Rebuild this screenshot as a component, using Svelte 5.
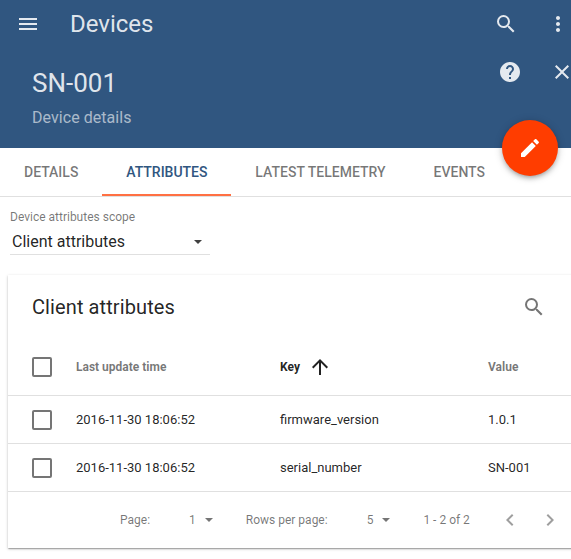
<script>
    const tabs = ['DETAILS', 'ATTRIBUTES', 'LATEST TELEMETRY', 'EVENTS']
    const rows = [
        { time: '2016-11-30 18:06:52', key: 'firmware_version', value: '1.0.1' },
        { time: '2016-11-30 18:06:52', key: 'serial_number', value: 'SN-001' }
    ]
</script>

<div class="page">
    <header>
        <div class="toolbar">
            <svg class="menu" width="24" height="24" viewBox="0 0 24 24"><path d="M3 18h18v-2H3v2zm0-5h18v-2H3v2zm0-7v2h18V6H3z"/></svg>
            <span class="app-title">Devices</span>
            <svg class="search" width="24" height="24" viewBox="0 0 24 24"><path d="M15.5 14h-.79l-.28-.27A6.471 6.471 0 0 0 16 9.5 6.5 6.5 0 1 0 9.5 16c1.61 0 3.09-.59 4.23-1.57l.27.28v.79l5 4.99L20.49 19l-4.99-5zm-6 0C7.01 14 5 11.99 5 9.5S7.01 5 9.5 5 14 7.01 14 9.5 11.99 14 9.5 14z"/></svg>
            <svg class="more" width="24" height="24" viewBox="0 0 24 24"><path d="M12 8c1.1 0 2-.9 2-2s-.9-2-2-2-2 .9-2 2 .9 2 2 2zm0 2c-1.1 0-2 .9-2 2s.9 2 2 2 2-.9 2-2-.9-2-2-2zm0 6c-1.1 0-2 .9-2 2s.9 2 2 2 2-.9 2-2-.9-2-2-2z"/></svg>
        </div>
        <div class="details">
            <div class="names">
                <h1>SN-001</h1>
                <p>Device details</p>
            </div>
            <svg class="help" width="24" height="24" viewBox="0 0 24 24"><path d="M12 2C6.48 2 2 6.48 2 12s4.48 10 10 10 10-4.48 10-10S17.52 2 12 2zm1 17h-2v-2h2v2zm2.07-7.75l-.9.92C13.45 12.9 13 13.5 13 15h-2v-.5c0-1.1.45-2.1 1.17-2.83l1.24-1.26c.37-.36.59-.86.59-1.41 0-1.1-.9-2-2-2s-2 .9-2 2H8c0-2.21 1.79-4 4-4s4 1.79 4 4c0 .88-.36 1.68-.93 2.25z"/></svg>
            <svg class="close" width="24" height="24" viewBox="0 0 24 24"><path d="M19 6.41L17.59 5 12 10.59 6.41 5 5 6.41 10.59 12 5 17.59 6.41 19 12 13.41 17.59 19 19 17.59 13.41 12z"/></svg>
        </div>
    </header>

    <button class="fab" aria-label="Edit">
        <svg width="24" height="24" viewBox="0 0 24 24"><path d="M3 17.25V21h3.75L17.81 9.94l-3.75-3.75L3 17.25zM20.71 7.04c.39-.39.39-1.02 0-1.41l-2.34-2.34c-.39-.39-1.02-.39-1.41 0l-1.83 1.83 3.75 3.75 1.83-1.83z"/></svg>
    </button>

    <nav>
        {#each tabs as tab, i}
            <span class="tab" class:active={i === 1}>{tab}</span>
        {/each}
    </nav>

    <section class="scope">
        <label for="scope-value">Device attributes scope</label>
        <div class="select" id="scope-value">
            <span>Client attributes</span>
            <i class="caret"></i>
        </div>
    </section>

    <section class="card">
        <div class="card-head">
            <h2>Client attributes</h2>
            <svg width="24" height="24" viewBox="0 0 24 24"><path d="M15.5 14h-.79l-.28-.27A6.471 6.471 0 0 0 16 9.5 6.5 6.5 0 1 0 9.5 16c1.61 0 3.09-.59 4.23-1.57l.27.28v.79l5 4.99L20.49 19l-4.99-5zm-6 0C7.01 14 5 11.99 5 9.5S7.01 5 9.5 5 14 7.01 14 9.5 11.99 14 9.5 14z"/></svg>
        </div>

        <div class="row head">
            <span class="check"></span>
            <span>Last update time</span>
            <span class="sorted">Key
                <svg width="24" height="24" viewBox="0 0 24 24"><path d="M4 12l1.41 1.41L11 7.83V20h2V7.83l5.58 5.59L20 12l-8-8-8 8z"/></svg>
            </span>
            <span>Value</span>
        </div>
        {#each rows as row}
            <div class="row">
                <span class="check"></span>
                <span>{row.time}</span>
                <span>{row.key}</span>
                <span>{row.value}</span>
            </div>
        {/each}

        <div class="pager">
            <span class="pager-label">Page:</span>
            <span class="first">1</span><i class="caret small"></i>
            <span class="pager-label rows">Rows per page:</span>
            <span class="second">5</span><i class="caret small"></i>
            <span class="range">1 - 2 of 2</span>
            <svg class="prev" width="24" height="24" viewBox="0 0 24 24"><path d="M15.41 7.41L14 6l-6 6 6 6 1.41-1.41L10.83 12z"/></svg>
            <svg class="next" width="24" height="24" viewBox="0 0 24 24"><path d="M10 6L8.59 7.41 13.17 12l-4.58 4.59L10 18l6-6z"/></svg>
        </div>
    </section>
</div>

<style>
    :global(body) {
        margin: 0;
        background: #fff;
        overflow: hidden;
    }

    .page {
        position: relative;
        width: 571px;
        height: 559px;
        overflow: hidden;
        font-family: Roboto, sans-serif;
        color: rgba(0, 0, 0, 0.87);
    }

    header {
        height: 148px;
        background: #305680;
        color: rgba(255, 255, 255, 0.87);
        fill: rgba(255, 255, 255, 0.87);
    }

    .toolbar {
        display: flex;
        align-items: center;
        height: 48px;
        padding-left: 16px;
    }

    .app-title {
        margin-left: 30px;
        font-size: 24px;
    }

    .toolbar .search {
        margin-left: auto;
    }

    .toolbar .more {
        margin-left: 28px;
        margin-right: 1px;
    }

    .details {
        display: flex;
        padding-left: 32px;
    }

    .names {
        flex: 1;
    }

    h1 {
        margin: 0;
        padding-top: 17px;
        font-size: 26px;
        font-weight: 400;
        line-height: 36px;
    }

    .names p {
        margin: 7px 0 0;
        font-size: 16px;
        line-height: 20px;
        letter-spacing: 0.05px;
        color: rgba(255, 255, 255, 0.6);
    }

    .help {
        margin-top: 12px;
    }

    .close {
        margin: 12px -3px 0 28px;
    }

    .fab {
        position: absolute;
        left: 502px;
        top: 120px;
        width: 56px;
        height: 56px;
        padding: 16px;
        border: 0;
        border-radius: 50%;
        background: #ff3d00;
        fill: #fff;
        box-shadow: 0 1px 8px rgba(0, 0, 0, 0.2), 0 3px 4px rgba(0, 0, 0, 0.14), 0 3px 3px -2px rgba(0, 0, 0, 0.12);
    }

    nav {
        display: flex;
        height: 48px;
        border-bottom: 1px solid #e0e0e0;
    }

    .tab {
        box-sizing: border-box;
        height: 48px;
        padding: 0 24px;
        font-size: 14px;
        font-weight: 500;
        line-height: 48px;
        color: rgba(0, 0, 0, 0.54);
    }

    .tab.active {
        color: #305680;
        letter-spacing: -0.03px;
        border-bottom: 2px solid #ff7043;
    }

    .scope {
        width: 200px;
        margin: 12px 0 0 10px;
    }

    .scope label {
        display: block;
        font-size: 12px;
        line-height: 16px;
        color: rgba(0, 0, 0, 0.54);
    }

    .select {
        display: flex;
        align-items: center;
        justify-content: space-between;
        box-sizing: border-box;
        height: 30px;
        padding: 4px 8px 0 2px;
        font-size: 16px;
        border-bottom: 1px solid #e0e0e0;
    }

    .caret {
        width: 0;
        height: 0;
        border: 4px solid transparent;
        border-top-color: rgba(0, 0, 0, 0.75);
        border-bottom: 0;
    }

    .caret.small {
        border-top-color: rgba(0, 0, 0, 0.54);
        margin-left: 9px;
    }

    .card {
        box-sizing: border-box;
        width: 600px;
        height: 273px;
        margin: 20px 0 0 8px;
        background: #fff;
        box-shadow: 0 1px 3px rgba(0, 0, 0, 0.2), 0 1px 1px rgba(0, 0, 0, 0.14), 0 2px 1px -1px rgba(0, 0, 0, 0.12);
    }

    .card-head {
        display: flex;
        align-items: center;
        justify-content: space-between;
        width: 540px;
        height: 64px;
        box-sizing: border-box;
        padding: 0 2px 0 24px;
        fill: rgba(0, 0, 0, 0.54);
    }

    h2 {
        margin: 0;
        font-size: 20px;
        font-weight: 400;
        letter-spacing: 0.1px;
    }

    .row {
        display: grid;
        grid-template-columns: 44px 204px 208px 1fr;
        align-items: center;
        height: 47px;
        padding-left: 24px;
        font-size: 13px;
        border-bottom: 1px solid #e0e0e0;
    }

    .row.head {
        height: 56px;
        font-size: 12px;
        font-weight: 700;
        color: rgba(0, 0, 0, 0.54);
    }

    .sorted {
        display: flex;
        align-items: center;
        gap: 8px;
        color: rgba(0, 0, 0, 0.87);
        fill: rgba(0, 0, 0, 0.87);
    }

    .check {
        box-sizing: border-box;
        width: 20px;
        height: 20px;
        border: 2px solid rgba(0, 0, 0, 0.54);
        border-radius: 2px;
    }

    .pager {
        display: flex;
        align-items: center;
        width: 563px;
        height: 56px;
        box-sizing: border-box;
        padding-left: 112px;
        font-size: 12px;
        color: rgba(0, 0, 0, 0.54);
        fill: rgba(0, 0, 0, 0.38);
    }

    .first,
    .second {
        margin-left: 39px;
    }

    .rows {
        margin-left: 33px;
    }

    .range {
        margin-left: 33px;
    }

    .prev {
        margin-left: 28px;
    }

    .next {
        margin-left: 16px;
    }
</style>
